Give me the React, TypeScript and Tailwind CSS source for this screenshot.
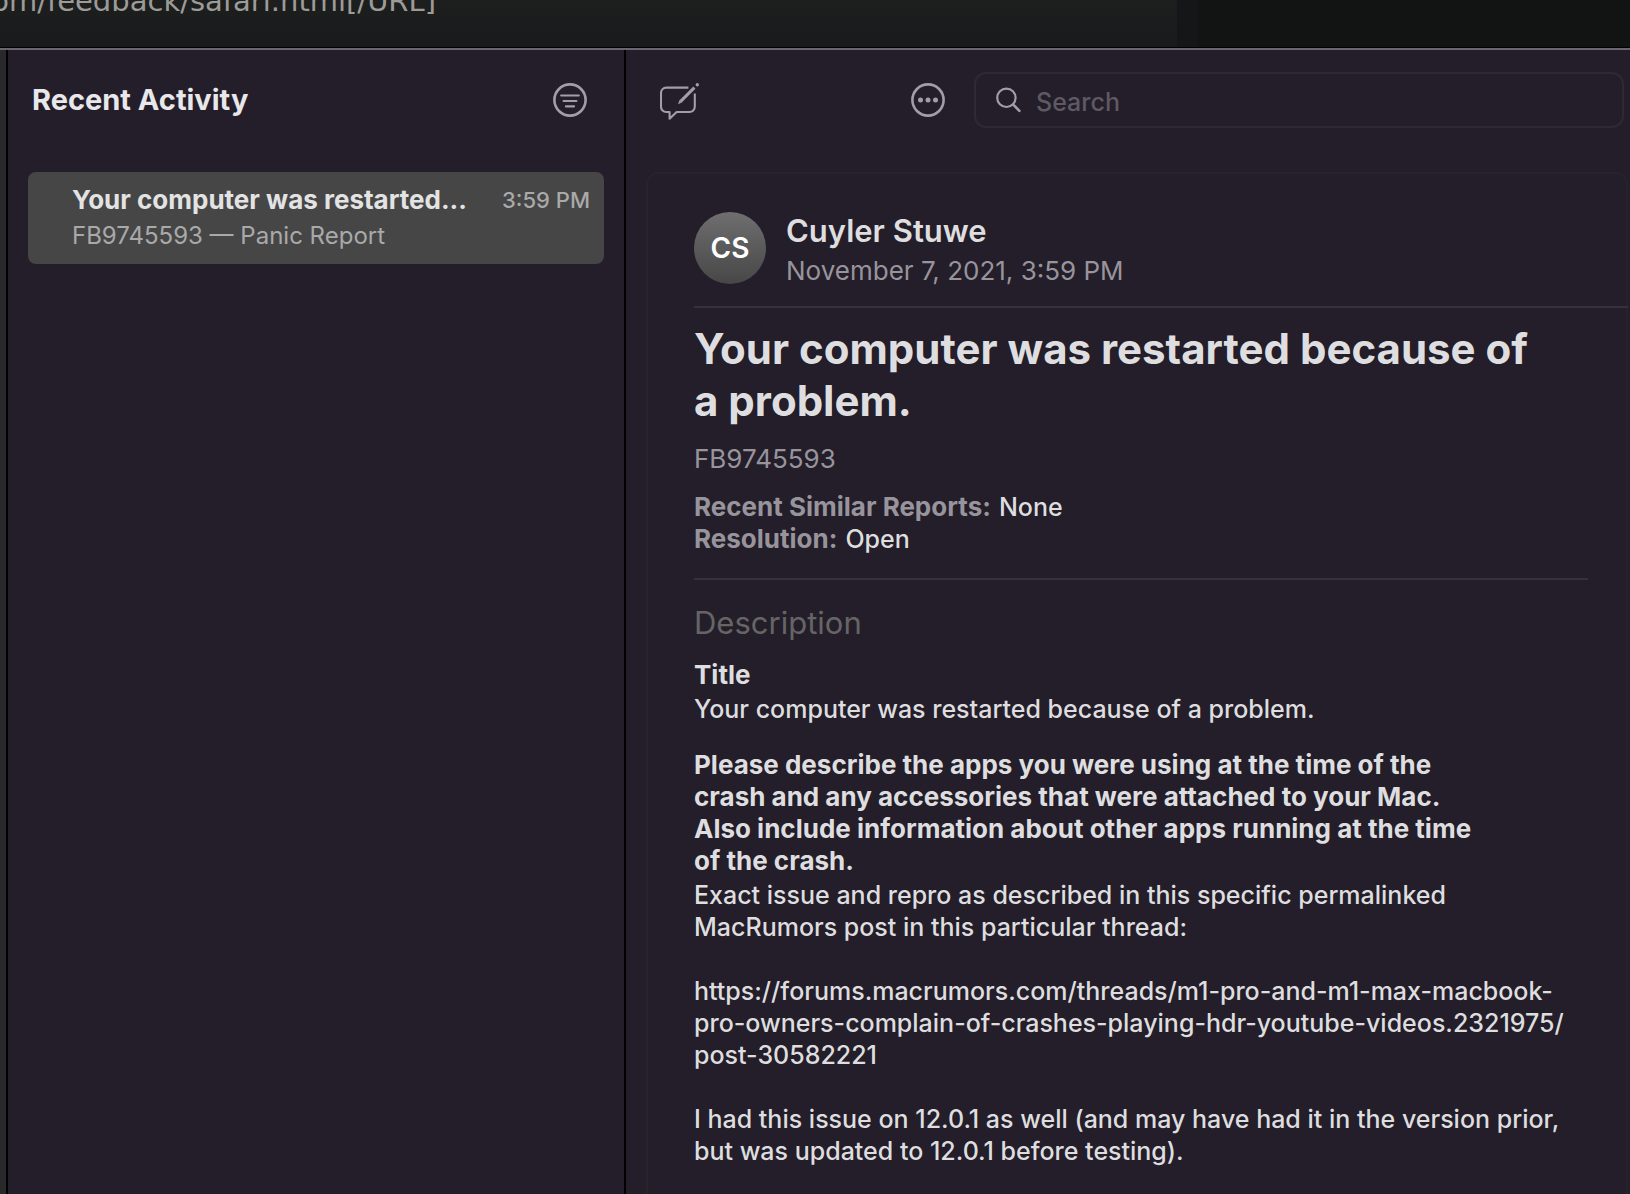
import React from "react";

interface Answer {
  question: string;
  paragraphs: string[][];
}

const answers: Answer[] = [
  {
    question: "Title",
    paragraphs: [["Your computer was restarted because of a problem."]],
  },
  {
    question:
      "Please describe the apps you were using at the time of the crash and any accessories that were attached to your Mac. Also include information about other apps running at the time of the crash.",
    paragraphs: [
      ["Exact issue and repro as described in this specific permalinked", "MacRumors post in this particular thread:"],
      [
        "https://forums.macrumors.com/threads/m1-pro-and-m1-max-macbook-",
        "pro-owners-complain-of-crashes-playing-hdr-youtube-videos.2321975/",
        "post-30582221",
      ],
      [
        "I had this issue on 12.0.1 as well (and may have had it in the version prior,",
        "but was updated to 12.0.1 before testing).",
      ],
    ],
  },
];

const FilterIcon = () => (
  <svg width="34" height="34" viewBox="0 0 34 34" fill="none" stroke="currentColor" strokeLinecap="round">
    <circle cx="17" cy="17" r="15.6" strokeWidth="2.6" />
    <path d="M8.2 12.5h17.6M10.6 18h12.8M13 23.4h8" strokeWidth="2.2" />
  </svg>
);

const MoreIcon = () => (
  <svg width="34" height="34" viewBox="0 0 34 34" fill="none" stroke="currentColor">
    <circle cx="17" cy="17" r="15.6" strokeWidth="2.6" />
    <g fill="currentColor" stroke="none">
      <circle cx="9.5" cy="17" r="2.5" />
      <circle cx="17" cy="17" r="2.5" />
      <circle cx="24.5" cy="17" r="2.5" />
    </g>
  </svg>
);

const ComposeIcon = () => (
  <svg
    width="40"
    height="40"
    viewBox="0 -2 40 40"
    fill="none"
    stroke="currentColor"
    strokeLinecap="butt"
    strokeLinejoin="round"
  >
    <path
      d="M28.4 5.6H6.2a5.2 5.2 0 0 0-5.2 5.2v14a5.2 5.2 0 0 0 5.2 5.2h3.4V36.8l7-6.8h13a5.2 5.2 0 0 0 5.2-5.2V11.6"
      strokeWidth="2.1"
    />
    <path d="M20.6 19.4 34.4 5.6" strokeWidth="3" />
    <path d="m18.6 21.6 1.2-3.2 1.8 1.8z" fill="currentColor" strokeWidth="0.8" />
    <circle cx="37.3" cy="2.7" r="1.7" fill="currentColor" stroke="none" />
  </svg>
);

const SearchIcon = () => (
  <svg
    width="26"
    height="26"
    viewBox="0 0 26 26"
    fill="none"
    stroke="currentColor"
    strokeWidth="2.2"
    strokeLinecap="round"
  >
    <circle cx="10.4" cy="10.8" r="9.2" />
    <path d="m17.2 17.6 6.2 6.2" strokeWidth="2.6" />
  </svg>
);

const Sidebar = () => (
  <aside className="w-[620px] shrink-0 border-x-2 border-black bg-[#231e29]">
    <div className="flex items-center justify-between pt-8 pl-6 pr-[37px]">
      <h2 className="text-[29px] leading-9 font-bold text-[#e8e7e9]">Recent Activity</h2>
      <button type="button" aria-label="Filter" className="text-[#a39dab]">
        <FilterIcon />
      </button>
    </div>
    <ul className="pt-[54px] px-5">
      <li>
        <button type="button" className="w-full h-[92px] rounded-lg bg-[#464646] pl-11 pr-[14px] text-left">
          <span className="flex items-center justify-between">
            <span className="text-[26px] leading-9 font-bold text-[#e3e3e3]">Your computer was restarted...</span>
            <span className="text-[22px] leading-9 font-medium text-[#a9a9a9]">3:59 PM</span>
          </span>
          <span className="block text-[24px] leading-9 text-[#a9a9a9]">FB9745593 — Panic Report</span>
        </button>
      </li>
    </ul>
  </aside>
);

const Toolbar = () => (
  <div className="flex items-center pt-[22px] pl-[34px] pr-[6px]">
    <button type="button" aria-label="New feedback" className="text-[#a39dab]">
      <ComposeIcon />
    </button>
    <button type="button" aria-label="More" className="ml-auto mr-[29px] text-[#a39dab]">
      <MoreIcon />
    </button>
    <label className="flex items-center gap-[14px] w-[650px] h-14 rounded-xl border-2 border-[#2f2934] pl-5 pr-4 text-[#a39dab]">
      <SearchIcon />
      <input
        type="search"
        aria-label="Search"
        placeholder="Search"
        className="flex-1 bg-transparent pt-1.5 text-[25px] font-medium outline-none placeholder:text-[#5e5963]"
      />
    </label>
  </div>
);

const Report = () => (
  <article className="mt-11 ml-5 mr-[2px] flex-1 rounded-t-xl border-2 border-b-0 border-[#28232b] pt-[38px] pl-[46px]">
    <header className="-mr-[2px] flex items-start gap-5 pb-[14px] border-b-2 border-[#37313c]">
      <div className="flex size-[72px] items-center justify-center rounded-full bg-linear-to-b from-[#6f6f6f] to-[#474747] text-[28px] font-semibold text-white">
        CS
      </div>
      <div>
        <p className="text-[31px] leading-[38px] font-semibold text-[#dedddf]">Cuyler Stuwe</p>
        <p className="text-[26px] leading-[42px] text-[#98949c]">November 7, 2021, 3:59 PM</p>
      </div>
    </header>
    <div className="mr-[38px] pt-[15px] pb-[23px] border-b-2 border-[#37313c] text-[25px] leading-8 font-medium">
      <h1 className="text-[42px] leading-[52px] font-bold text-[#dedddf]">
        Your computer was restarted because of
        <br />a problem.
      </h1>
      <p className="pt-4 text-[26px] leading-8 font-normal text-[#98949c]">FB9745593</p>
      <dl className="pt-4 text-[#dedddf]">
        <div className="flex gap-2">
          <dt className="text-[26px] font-bold text-[#98949c]">Recent Similar Reports:</dt>
          <dd>None</dd>
        </div>
        <div className="flex gap-2">
          <dt className="text-[26px] font-bold text-[#98949c]">Resolution:</dt>
          <dd>Open</dd>
        </div>
      </dl>
    </div>
    <section className="pt-[23px] text-[25px] leading-8 font-medium text-[#dedddf]">
      <h2 className="pb-4 text-[31px] leading-10 font-normal text-[#666566]">Description</h2>
      <div className="flex flex-col gap-6">
        {answers.map((item: Answer) => (
          <div key={item.question}>
            <h3 className="max-w-[800px] pb-[2px] text-[26px] leading-8 font-bold">{item.question}</h3>
            <div className="flex flex-col gap-8">
              {item.paragraphs.map((lines) => (
                <p key={lines[0]}>
                  {lines.map((line) => (
                    <span key={line} className="block whitespace-nowrap">
                      {line}
                    </span>
                  ))}
                </p>
              ))}
            </div>
          </div>
        ))}
      </div>
    </section>
  </article>
);

export default function App() {
  return (
    <div className="flex h-screen flex-col overflow-hidden bg-[#29282b] font-['Inter',sans-serif]">
      <div className="flex h-12 shrink-0 overflow-hidden border-b border-black bg-[#121414]">
        <div className="flex w-[1177px] items-end bg-linear-to-b from-[#1d1f1f] to-[#191a1b] pb-[30px]">
          <p className="flex w-[436px] justify-end font-['DejaVu_Sans',sans-serif] text-[29px] leading-8 whitespace-nowrap text-[#9d9b98]">
            om/feedback/safari.html[/URL]
          </p>
        </div>
        <div className="w-[21px] bg-[#151617]" />
      </div>
      <div className="flex min-h-0 flex-1 border-t-2 border-[#6b6570] pl-[6px]">
        <Sidebar />
        <main className="flex min-w-0 flex-1 flex-col bg-[#231e29]">
          <Toolbar />
          <Report />
        </main>
      </div>
    </div>
  );
}
